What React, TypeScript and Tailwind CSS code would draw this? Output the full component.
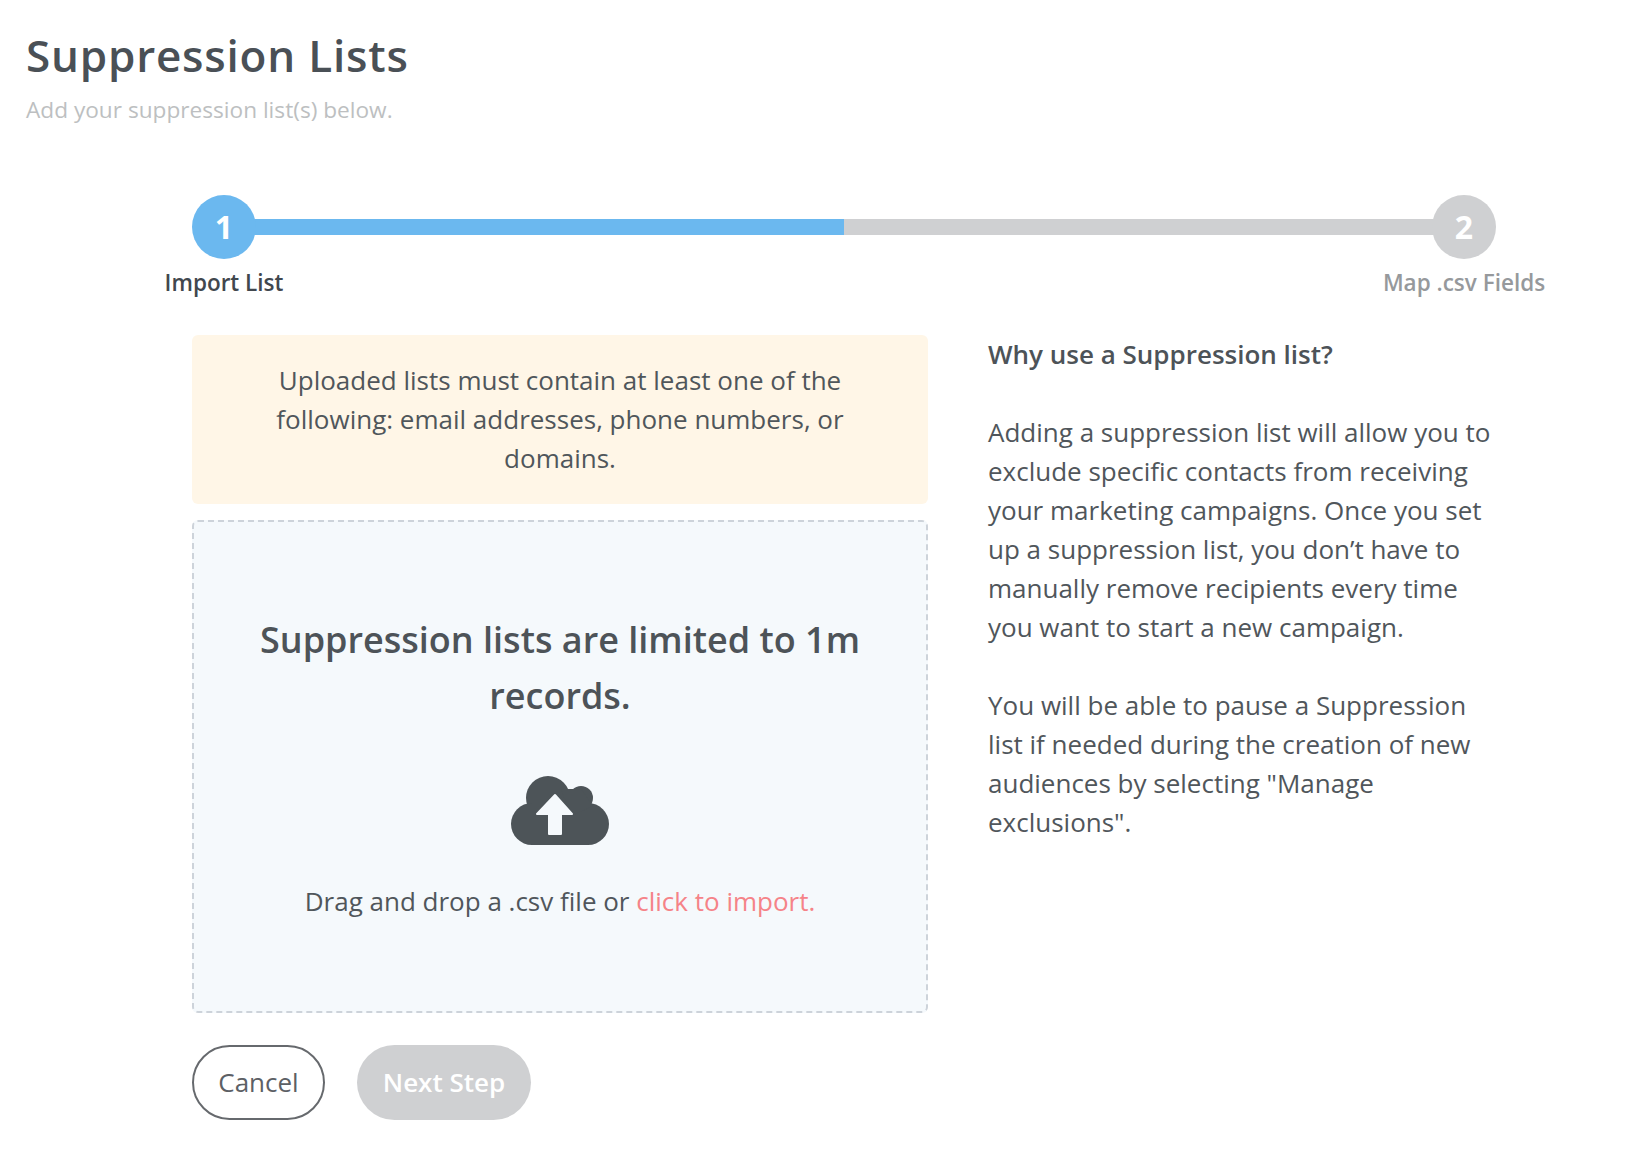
import { ReactNode } from "react";

function Step({ n, label, active }: { n: number; label: string; active: boolean }) {
  return (
    <div className="flex w-16 flex-col items-center">
      <div
        className={`z-10 flex h-16 w-16 items-center justify-center rounded-full text-[32px] font-bold text-white ${
          active ? "bg-[#6bb8ef]" : "bg-[#cfd0d2]"
        }`}
      >
        {n}
      </div>
      <div
        className={`mt-[9px] whitespace-nowrap text-[22.5px] leading-[30px] font-semibold ${
          active ? "text-[#41474e]" : "text-[#96999c]"
        }`}
      >
        {label}
      </div>
    </div>
  );
}

function Para({ children }: { children: ReactNode }) {
  return <p className="mb-[39px] text-[26px] leading-[39px] text-[#50565b]">{children}</p>;
}

export default function App() {
  return (
    <div className="min-h-[1150px] bg-white font-['Open_Sans','Noto_Sans',sans-serif] text-[#4a5056]">
      <div className="pl-[26px] pt-[24px]">
        <h1 className="text-[44px] leading-[62px] font-semibold tracking-[0.8px] text-[#4a5056]">Suppression Lists</h1>
        <p className="mt-[9px] text-[22.65px] leading-[30px] text-[#bdbfc1]">Add your suppression list(s) below.</p>
      </div>

      <div className="ml-[192px] mt-[70px] w-[1304px]">
        {/* stepper */}
        <div className="relative flex justify-between">
          <div className="absolute left-[32px] right-[32px] top-[24px] flex h-4">
            <div className="h-4 w-[620px] bg-[#6bb8ef]" />
            <div className="h-4 flex-1 bg-[#cfd0d2]" />
          </div>
          <Step n={1} label="Import List" active />
          <Step n={2} label="Map .csv Fields" active={false} />
        </div>

        <div className="mt-[37px] flex">
          <div className="w-[736px] shrink-0">
            <div className="rounded-[6px] bg-[#fff6e7] px-[60px] py-[26px] text-center text-[26px] leading-[39px] text-[#50565b]">
              Uploaded lists must contain at least one of the following: email addresses, phone numbers, or domains.
            </div>

            <div className="mt-4 flex h-[493px] flex-col items-center rounded-[6px] border-2 border-dashed border-[#cdd3da] bg-[#f5f9fc] px-[60px] pt-[90px] text-center">
              <h2 className="text-[36px] leading-[56px] font-semibold text-[#4d5358]">
                Suppression lists are limited to 1m records.
              </h2>
              <svg className="mt-[52px]" width="98" height="69" viewBox="0 0 98 69" fill="none">
                <g fill="#4d5458">
                  <circle cx="37" cy="22" r="22" />
                  <circle cx="70" cy="22" r="12" />
                  <circle cx="21" cy="48" r="21" />
                  <circle cx="77" cy="48" r="21" />
                  <rect x="21" y="20" width="56" height="49" />
                  <path d="M50 13H70L82 30L60 40Z" />
                </g>
                <path
                  fill="#f5f9fc"
                  stroke="#f5f9fc"
                  strokeWidth="2"
                  strokeLinejoin="round"
                  d="M44 19L61 38H50V58H38V38H26Z"
                />
              </svg>
              <p className="mt-[37px] text-[26px] leading-[39px] text-[#50565b]">
                Drag and drop a .csv file or <a className="text-[#f58388]">click to import.</a>
              </p>
            </div>

            <div className="mt-8 flex gap-8">
              <button className="h-[75px] w-[133px] rounded-full border-2 border-[#66696d] text-[26px] text-[#5c6065]">
                Cancel
              </button>
              <button className="h-[75px] w-[174px] rounded-full bg-[#cfd0d2] text-[26px] font-semibold text-white">
                Next Step
              </button>
            </div>
          </div>

          <div className="ml-[60px] w-[510px]">
            <h3 className="mb-[39px] text-[26px] leading-[39px] font-semibold text-[#4d5358]">Why use a Suppression list?</h3>
            <Para>
              Adding a suppression list will allow you to exclude specific contacts from receiving your marketing
              campaigns. Once you set up a suppression list, you don’t have to manually remove recipients every time you
              want to start a new campaign.
            </Para>
            <Para>
              You will be able to pause a Suppression list if needed during the creation of new audiences by selecting
              "Manage exclusions".
            </Para>
          </div>
        </div>
      </div>
    </div>
  );
}
